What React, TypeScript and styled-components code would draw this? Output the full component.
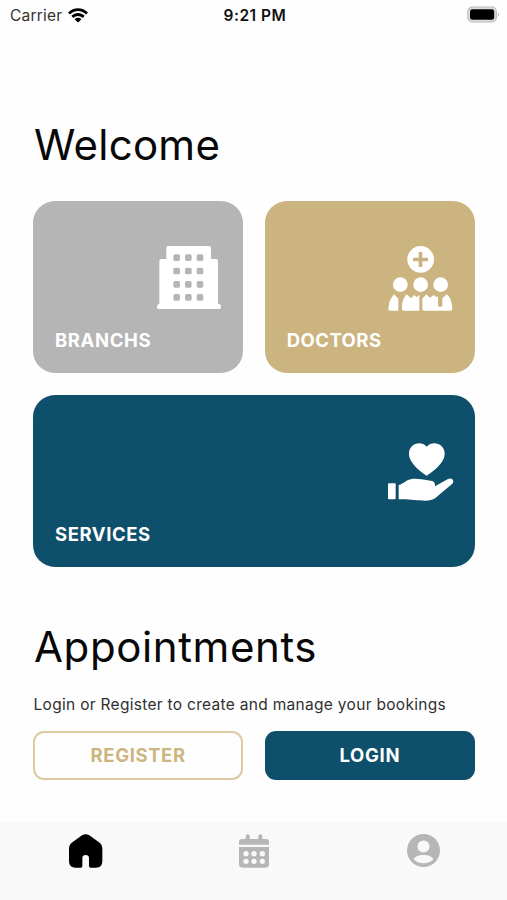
import React from "react";
import styled, { createGlobalStyle } from "styled-components";

const GlobalStyle = createGlobalStyle`
  * { box-sizing: border-box; }
  body { margin: 0; background: #fff; }
  button { font: inherit; cursor: pointer; }
`;

const Screen = styled.div`
  width: 507px;
  height: 900px;
  display: flex;
  flex-direction: column;
  background: #fefefe;
  color: #080808;
  font-family: Inter, "Liberation Sans", sans-serif;
  overflow: hidden;
`;

const StatusBar = styled.header`
  height: 30px;
  flex: none;
  display: grid;
  grid-template-columns: 1fr auto 1fr;
  align-items: center;
  padding: 1px 7px 0 10px;
  line-height: 29px;
`;

const Carrier = styled.div`
  display: flex;
  align-items: center;
  gap: 6px;
  font-size: 15.5px;
  letter-spacing: 0.2px;
  color: #333;

  svg { margin-top: -1px; }
`;

const Clock = styled.time`
  font-size: 15.5px;
  font-weight: 600;
  letter-spacing: 0.5px;
  color: #111;
`;

const BatterySlot = styled.div`
  display: flex;
  justify-content: flex-end;
  padding-bottom: 3px;
`;

const Content = styled.main`
  flex: 1;
  display: flex;
  flex-direction: column;
  padding: 90px 32px 0 33px;
`;

const Heading = styled.h1<{ $spacing: number }>`
  margin: 0 0 0 1px;
  height: 50px;
  line-height: 50px;
  font-size: 42px;
  font-weight: 400;
  letter-spacing: ${(p) => p.$spacing}px;
  white-space: nowrap;
`;

const CardGrid = styled.section`
  margin: 30.5px 0 54.5px;
  display: grid;
  grid-template-columns: 1fr 1fr;
  grid-auto-rows: 172.5px;
  gap: 21.5px;
`;

const Card = styled.button<{ $color: string; $wide?: boolean }>`
  grid-column: ${(p) => (p.$wide ? "1 / -1" : "auto")};
  display: flex;
  flex-direction: column;
  justify-content: space-between;
  padding: ${(p) => (p.$wide ? "48px 21px 21px 22px" : "45px 22px 21px 22px")};
  border: 0;
  border-radius: 22px;
  background: ${(p) => p.$color};
  color: #fff;
  text-align: left;
`;

const CardIcon = styled.span`
  align-self: flex-end;
  display: flex;
`;

const CardLabel = styled.span<{ $spacing: number }>`
  font-size: 18.5px;
  font-weight: 700;
  line-height: 24px;
  letter-spacing: ${(p) => p.$spacing}px;
`;

const Note = styled.p`
  margin: 22px 0 15.5px 0.5px;
  height: 22px;
  line-height: 22px;
  font-size: 15.5px;
  letter-spacing: 0.3px;
  color: #303030;
  white-space: nowrap;
`;

const Actions = styled.div`
  display: grid;
  grid-template-columns: 1fr 1fr;
  gap: 21.5px;
`;

const Action = styled.button<{ $filled?: boolean; $spacing: number }>`
  height: 48.5px;
  padding: 0 0 1px;
  border: 2px solid ${(p) => (p.$filled ? "#0e506c" : "#dccba1")};
  border-radius: 11px;
  background: ${(p) => (p.$filled ? "#0e506c" : "transparent")};
  color: ${(p) => (p.$filled ? "#fff" : "#cdb57f")};
  && { font-size: 18.5px; font-weight: 700; }
  letter-spacing: ${(p) => p.$spacing}px;
`;

const TabBar = styled.nav`
  flex: none;
  height: 78px;
  display: grid;
  grid-template-columns: repeat(3, 1fr);
  background: #f9f9f9;
`;

const Tab = styled.button<{ $active?: boolean }>`
  display: flex;
  justify-content: center;
  align-items: flex-start;
  padding: 12px 0 0 ${(p) => (p.$active ? 2 : 1)}px;
  border: 0;
  background: none;
  color: ${(p) => (p.$active ? "#000" : "#b6b6b6")};
`;

const WifiIcon = () => (
  <svg width="20" height="15" viewBox="0 0 20 15" fill="#000">
    <path d="M0 4.4C5.3-1.3 14.7-1.3 20 4.4L18 6.5C13.6 1.8 6.4 1.8 2 6.5Z" />
    <path d="M3.3 7.8C7 3.9 13 3.9 16.7 7.8L14.7 9.9C12 7.2 8 7.2 5.3 9.9Z" />
    <path d="M6.6 11.2C8.5 9.3 11.5 9.3 13.4 11.2L10.7 14Q10 14.7 9.3 14Z" />
  </svg>
);

const BatteryIcon = () => (
  <svg width="33" height="17" viewBox="0 0 33 17">
    <rect x="0.9" y="1" width="28.4" height="15" rx="4.5" fill="#ddd" stroke="#bbb" strokeWidth="1.2" />
    <rect x="3" y="3.2" width="24.2" height="10.6" rx="2.4" fill="#000" />
    <path d="M30.8 6.2Q32.8 8.5 30.8 10.8Z" fill="#aaa" />
  </svg>
);

const BuildingIcon = () => (
  <svg width="64" height="63.3" viewBox="36 30 192 190" fill="#fff">
    <path
      fillRule="evenodd"
      d={
        "M70 30H192Q198 30 198 36V69H213Q219 69 219 75V204H222Q228 205 228 212Q228 220 221 220H43Q36 220 36 212Q36 205 43 204V75Q43 69 49 69H64V36Q64 30 70 30Z" +
        [95, 130, 165]
          .map((x) =>
            [65, 105, 145, 184]
              .map((y) => `M${x - 5} ${y - 10}h10q5 0 5 5v10q0 5 -5 5h-10q-5 0 -5 -5v-10q0 -5 5 -5Z`)
              .join("")
          )
          .join("")
      }
    />
  </svg>
);

const DoctorsIcon = () => (
  <svg width="65" height="65" viewBox="40 30 195 195" fill="#fff">
    <path
      fillRule="evenodd"
      d="M138 30a40 40 0 1 1 0 80a40 40 0 1 1 0-80ZM132 48V65H115V76H132V93H143V76H160V65H143V48Z"
    />
    <circle cx="77" cy="146" r="22" />
    <circle cx="138" cy="146" r="22" />
    <circle cx="198" cy="146" r="22" />
    <path d="M58 175L71 188V224H45Q41 224 41 219C42 204 46 188 58 175Z" />
    <path d="M96 175L109 187L119 177L126 184L134 176V224H86Q82 224 82 219C82 203 84 187 96 175Z" />
    <path d="M155 175L166 185L177 177L186 184L190 180V208Q190 213 196 213Q203 213 203 208V187L216 175C227 182 233 204 233 219Q233 224 228 224H148Q143 224 143 219V188Z" />
  </svg>
);

const CareIcon = () => (
  <svg width="66" height="58" viewBox="38 38 198 174" fill="#fff">
    <path d="M154 136C136 124 101 98 101 70C101 38 138 29 154 49C170 29 208 38 208 70C208 98 172 124 154 136Z" />
    <rect x="38" y="159" width="23" height="48" rx="3" />
    <path d="M70 164C86 160 93 148 109 146C125 144 151 149 170 152Q180 154 179 168L218 146C229 140 239 151 231 160L190 195C179 205 171 211 150 211C122 211 106 206 70 207Z" />
  </svg>
);

const HomeIcon = () => (
  <svg width="34" height="34" viewBox="57 57 102 102" fill="currentColor">
    <path d="M96 61Q107 55 118 61L149 83Q157 89 157 99V138Q157 158 138 158H122Q117 158 117 153V130Q117 120 107 120Q97 120 97 130V153Q97 158 92 158H77Q57 158 57 138V99Q57 89 65 83Z" />
  </svg>
);

const CalendarIcon = () => (
  <svg width="30" height="34" viewBox="57 56 90 102" fill="currentColor">
    <path d="M57 88V79Q57 71 66 71H77V63Q77 57 83 57Q89 57 89 63V71H115V63Q115 57 121 57Q127 57 127 63V71H138Q147 71 147 79V88Z" />
    <path
      fillRule="evenodd"
      d={
        "M57 95H147V147Q147 157 137 157H67Q57 157 57 147Z" +
        [78, 102, 127]
          .map((x) => [115, 138].map((y) => `M${x - 8} ${y}a8 8 0 1 0 16 0a8 8 0 1 0 -16 0Z`).join(""))
          .join("")
      }
    />
  </svg>
);

const ProfileIcon = () => (
  <svg width="33" height="33" viewBox="50 58 98 98">
    <circle cx="99" cy="107" r="49" fill="currentColor" />
    <circle cx="99" cy="95" r="18" fill="#f9f9f9" />
    <path d="M70 133C75 116 123 116 128 133C116 149 82 149 70 133Z" fill="#f9f9f9" />
  </svg>
);

export default function App() {
  return (
    <Screen>
      <GlobalStyle />
      <StatusBar>
        <Carrier>
          Carrier
          <WifiIcon />
        </Carrier>
        <Clock>9:21 PM</Clock>
        <BatterySlot>
          <BatteryIcon />
        </BatterySlot>
      </StatusBar>
      <Content>
        <Heading $spacing={0.25}>Welcome</Heading>
        <CardGrid>
          <Card $color="#b5b5b5">
            <CardIcon><BuildingIcon /></CardIcon>
            <CardLabel $spacing={0.6}>BRANCHS</CardLabel>
          </Card>
          <Card $color="#cbb47f">
            <CardIcon><DoctorsIcon /></CardIcon>
            <CardLabel $spacing={0.45}>DOCTORS</CardLabel>
          </Card>
          <Card $color="#0e506c" $wide>
            <CardIcon><CareIcon /></CardIcon>
            <CardLabel $spacing={0.55}>SERVICES</CardLabel>
          </Card>
        </CardGrid>
        <Heading as="h2" $spacing={0.6}>Appointments</Heading>
        <Note>Login or Register to create and manage your bookings</Note>
        <Actions>
          <Action $spacing={0.6}>REGISTER</Action>
          <Action $filled $spacing={0.7}>LOGIN</Action>
        </Actions>
      </Content>
      <TabBar>
        <Tab $active aria-label="Home"><HomeIcon /></Tab>
        <Tab aria-label="Calendar"><CalendarIcon /></Tab>
        <Tab aria-label="Profile"><ProfileIcon /></Tab>
      </TabBar>
    </Screen>
  );
}
